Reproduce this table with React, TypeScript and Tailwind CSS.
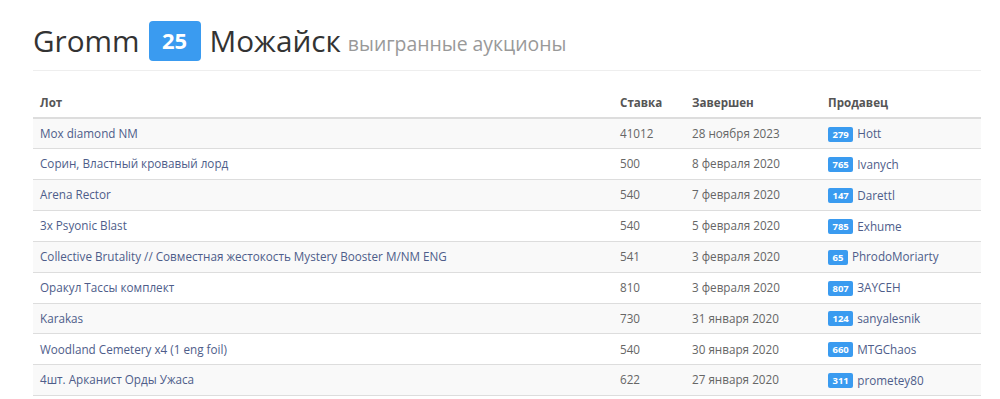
const rows = [
  { lot: "Mox diamond NM", bid: "41012", ended: "28 ноября 2023", rating: "279", seller: "Hott" },
  { lot: "Сорин, Властный кровавый лорд", bid: "500", ended: "8 февраля 2020", rating: "765", seller: "Ivanych" },
  { lot: "Arena Rector", bid: "540", ended: "7 февраля 2020", rating: "147", seller: "Darettl" },
  { lot: "3x Psyonic Blast", bid: "540", ended: "5 февраля 2020", rating: "785", seller: "Exhume" },
  { lot: "Collective Brutality // Совместная жестокость Mystery Booster M/NM ENG", bid: "541", ended: "3 февраля 2020", rating: "65", seller: "PhrodoMoriarty" },
  { lot: "Оракул Тассы комплект", bid: "810", ended: "3 февраля 2020", rating: "807", seller: "ЗАYCEH" },
  { lot: "Karakas", bid: "730", ended: "31 января 2020", rating: "124", seller: "sanyalesnik" },
  { lot: "Woodland Cemetery x4 (1 eng foil)", bid: "540", ended: "30 января 2020", rating: "660", seller: "MTGChaos" },
  { lot: "4шт. Арканист Орды Ужаса", bid: "622", ended: "27 января 2020", rating: "311", seller: "prometey80" },
];

export default function App() {
  return (
    <div className="min-h-[399px] bg-white font-['Open_Sans',sans-serif] text-[11.7px] text-[#666]">
      <div className="ml-[33px] w-[948px] pt-[19px]">
        {/* Page header */}
        <div className="flex h-[52px] items-center border-b border-[#eee] pb-[8px]">
          <h1 className="text-[29.7px] leading-[40px] text-[#333]">Gromm</h1>
          <span className="ml-[9px] flex h-[40px] w-[52px] items-center justify-center rounded-[4px] bg-[#3a9bf0] text-[22px] font-bold text-white">
            25
          </span>
          <h1 className="ml-[9px] text-[29.7px] leading-[40px] text-[#333]">Можайск</h1>
          <small className="ml-[7px] mt-[6px] text-[19.4px] text-[#999]">выигранные аукционы</small>
        </div>

        {/* Table */}
        <table className="mt-[17px] w-full table-fixed border-collapse">
          <thead>
            <tr className="h-[30px] border-b-2 border-[#ddd] text-left text-[11.6px] font-bold text-[#555]">
              <th className="w-[580px] pl-[7px]">Лот</th>
              <th className="w-[72px] pl-[7px]">Ставка</th>
              <th className="w-[136px] pl-[7px]">Завершен</th>
              <th className="pl-[7px]">Продавец</th>
            </tr>
          </thead>
          <tbody>
            {rows.map((r, i) => (
              <tr key={r.lot} className={`h-[30.85px] border-b border-[#ddd] ${i % 2 === 0 ? "bg-[#f9f9f9]" : "bg-white"}`}>
                <td className="truncate pl-[7px]">
                  <a href="#" className="text-[#4e5d8a]">{r.lot}</a>
                </td>
                <td className="pl-[7px]">{r.bid}</td>
                <td className="pl-[7px]">{r.ended}</td>
                <td className="pl-[7px]">
                  <span className="inline-flex items-center">
                    <span className="mr-[4px] rounded-[2px] bg-[#3a9bf0] px-[4.5px] text-[9.5px] font-bold leading-[15px] text-white">
                      {r.rating}
                    </span>
                    <a href="#" className="text-[#4e5d8a]">{r.seller}</a>
                  </span>
                </td>
              </tr>
            ))}
          </tbody>
        </table>
      </div>
    </div>
  );
}
